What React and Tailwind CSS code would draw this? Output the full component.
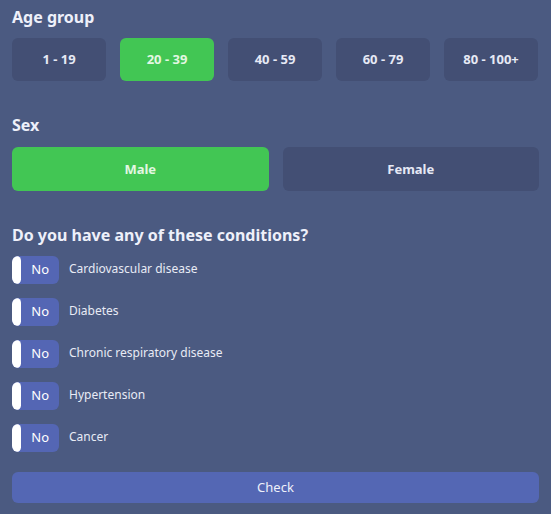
import { useState } from 'react';

const ages = ['1 - 19', '20 - 39', '40 - 59', '60 - 79', '80 - 100+']
const conditions = ['Cardiovascular disease', 'Diabetes', 'Chronic respiratory disease', 'Hypertension', 'Cancer']

const Toggle = ({ label }) => {
    return (
        <div className="flex items-center h-[28px]">
            <div className="relative w-[47px] h-[28px] rounded-[6px] bg-[#5466b4] flex items-center justify-end pr-[10px] overflow-hidden">
                <div className="absolute left-0 top-0 h-full w-[9px] bg-white rounded-[6px]"></div>
                <span className="text-[13px] text-white">No</span>
            </div>
            <span className="ml-[10px] text-[12px] text-[#e8ebf5] -mt-[3px]">{label}</span>
        </div>
    )
}

const App = () => {
    const [age, setAge] = useState(1)
    const [sex, setSex] = useState('Male')
    return (
        <div className="w-[551px] h-[514px] bg-[#4b5a81] px-[12px] pt-[5px] font-['Noto_Sans',sans-serif] text-white">
            <h1 className="text-[16px] leading-[24px] font-bold text-[#eef0fa]">Age group</h1>
            <div className="mt-[9px] flex gap-[14px]">
                {ages.map((a, i) => (
                    <button key={a} onClick={() => setAge(i)}
                        className={`w-[94px] h-[43px] rounded-[6px] text-[13px] font-bold ${age === i ? 'bg-[#42c654] text-[#e2f7e2]' : 'bg-[#434f74] text-[#e6e9f5]'}`}>
                        {a}
                    </button>
                ))}
            </div>
            <h1 className="mt-[32px] text-[16px] leading-[24px] font-bold text-[#eef0fa]">Sex</h1>
            <div className="mt-[10px] flex gap-[14px]">
                {['Male', 'Female'].map(s => (
                    <button key={s} onClick={() => setSex(s)}
                        className={`flex-1 h-[44px] pt-[2px] rounded-[6px] text-[13px] font-bold ${sex === s ? 'bg-[#42c654] text-[#e2f7e2]' : 'bg-[#434f74] text-[#e6e9f5]'}`}>
                        {s}
                    </button>
                ))}
            </div>
            <h1 className="mt-[32px] text-[16px] leading-[24px] font-bold text-[#eef0fa]">Do you have any of these conditions?</h1>
            <div className="mt-[9px] flex flex-col gap-[14px]">
                {conditions.map(c => <Toggle key={c} label={c} />)}
            </div>
            <button className="mt-[20px] w-full h-[31px] rounded-[6px] bg-[#5467b4] text-[13px] text-[#eef0fa]">Check</button>
        </div>
    )
}

export default App
